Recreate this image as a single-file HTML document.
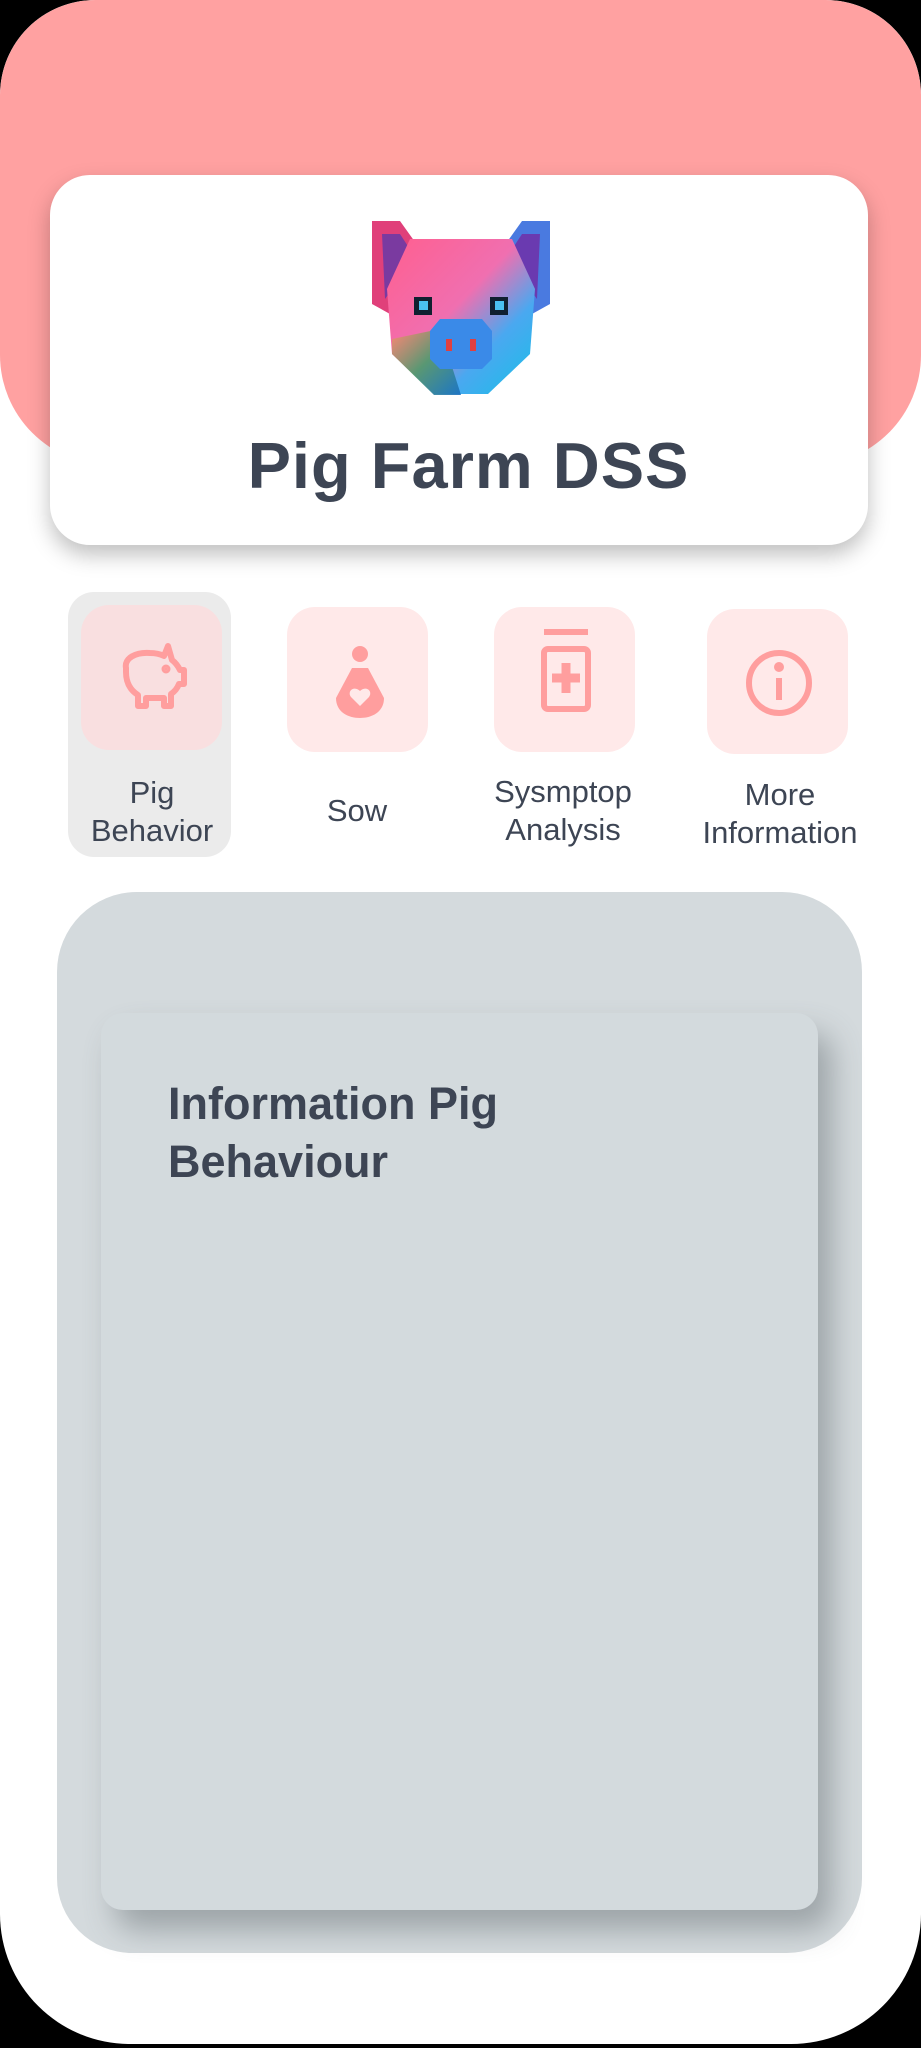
<!DOCTYPE html>
<html><head><meta charset="utf-8"><style>
*{margin:0;padding:0;box-sizing:border-box}
body{width:921px;height:2048px;background:#000;overflow:hidden;font-family:"Liberation Sans",sans-serif;position:relative}
.phone{position:absolute;left:0;top:0;width:921px;height:2044px;background:#fff;border-radius:95px 95px 130px 130px;overflow:hidden}
.pink{position:absolute;left:0;top:0;width:921px;height:465px;background:#ffa1a1;border-radius:95px 95px 110px 110px}
.card{position:absolute;left:50px;top:175px;width:818px;height:370px;background:#fff;border-radius:40px;box-shadow:0 10px 22px rgba(0,0,0,.25)}
.title{position:absolute;left:8px;width:100%;top:428px;text-align:center;font-size:65px;font-weight:bold;color:#3d4554;letter-spacing:1px}
.sel{position:absolute;left:68px;top:592px;width:163px;height:265px;background:#ebebeb;border-radius:26px}
.ib{position:absolute;width:141px;height:145px;border-radius:28px;background:#ffe9e9}
.lab{position:absolute;text-align:center;font-size:31px;color:#3d4554;line-height:38px;width:220px}
.panel{position:absolute;left:57px;top:892px;width:805px;height:1061px;background:#d4dadd;border-radius:80px 80px 75px 75px}
.inner{position:absolute;left:101px;top:1013px;width:717px;height:897px;background:#d3dadd;border-radius:22px;box-shadow:14px 20px 30px rgba(90,100,105,.45)}
.it{position:absolute;left:168px;top:1075px;font-size:45px;font-weight:bold;color:#3d4554;line-height:58px}
</style></head><body>
<div class="phone">
<div class="pink"></div>
<div class="card">
<svg style="position:absolute;left:320px;top:44px" width="182" height="180" viewBox="0 0 182 180">
<defs><linearGradient id="g" x1="0" y1="0" x2="1" y2="1"><stop offset="0" stop-color="#ff5f8f"/><stop offset=".45" stop-color="#f06fb0"/><stop offset=".7" stop-color="#4aa8f0"/><stop offset="1" stop-color="#17c0e8"/></linearGradient>
<linearGradient id="g2" x1="0" y1="0" x2="1" y2="1"><stop offset="0" stop-color="#ff8a70"/><stop offset=".5" stop-color="#4e9a6a"/><stop offset="1" stop-color="#1a6fc0"/></linearGradient></defs>
<polygon points="2,2 30,2 50,30 20,95 2,85" fill="#e0407a"/>
<polygon points="180,2 152,2 132,30 162,95 180,85" fill="#4a7ae0"/>
<polygon points="12,15 30,15 45,38 15,80" fill="#7a3aa0"/>
<polygon points="170,15 152,15 137,38 167,80" fill="#6a3ab0"/>
<path d="M40,20 H142 L165,70 L160,135 L118,175 H64 L22,135 L17,70 Z" fill="url(#g)"/>
<path d="M22,120 L70,110 L91,176 H64 L22,135 Z" fill="url(#g2)" opacity=".9"/>
<rect x="44" y="78" width="18" height="18" fill="#102030"/><rect x="49" y="82" width="9" height="9" fill="#4ac0f0"/>
<rect x="120" y="78" width="18" height="18" fill="#102030"/><rect x="125" y="82" width="9" height="9" fill="#4ac0f0"/>
<path d="M70,100 H112 L122,112 V140 L112,150 H70 L60,140 V112 Z" fill="#3a8ae8"/>
<rect x="76" y="120" width="6" height="12" fill="#e04040"/><rect x="100" y="120" width="6" height="12" fill="#e04040"/>
</svg>
</div>
<div class="title">Pig Farm DSS</div>

<div class="sel"></div>
<div class="ib" style="left:81px;top:605px;background:#f9dfe0"></div>
<div class="ib" style="left:287px;top:607px"></div>
<div class="ib" style="left:494px;top:607px"></div>
<div class="ib" style="left:707px;top:609px"></div>

<svg style="position:absolute;left:114px;top:640px" width="76" height="72" viewBox="0 0 72 72" fill="none" stroke="#ff9e9e" stroke-width="6" stroke-linejoin="round">
<path d="M10,28 C8,18 20,12 34,13 C40,13 44,14 48,16 L52,6 L56,20 C60,23 62,26 64,30 H68 V44 H63 C61,49 58,52 55,54 V66 H48 V58 H30 V66 H22 V55 C14,50 10,42 10,32 Z"/>
<circle cx="50" cy="29" r="1.5" fill="#ff9e9e"/>
</svg>
<svg style="position:absolute;left:330px;top:644px" width="60" height="76" viewBox="0 0 60 76">
<circle cx="30" cy="10" r="8" fill="#ff9e9e"/>
<path d="M22,24 H38 L54,54 C54,68 42,74 30,74 C18,74 6,68 6,54 Z" fill="#ff9e9e"/>
<path d="M30,62 L21,53 C17,48 23,41 30,47 C37,41 43,48 39,53 Z" fill="#ffe9e9"/>
</svg>
<svg style="position:absolute;left:538px;top:629px" width="56" height="84" viewBox="0 0 56 84" fill="none" stroke="#ff9e9e" stroke-width="6">
<line x1="6" y1="3" x2="50" y2="3"/>
<rect x="6" y="20" width="44" height="60" rx="4"/>
<path d="M28,34 V64 M14,49 H42" stroke-width="9"/>
</svg>
<svg style="position:absolute;left:743px;top:647px" width="72" height="72" viewBox="0 0 72 72" fill="none" stroke="#ff9e9e" stroke-width="6">
<circle cx="36" cy="36" r="30"/>
<line x1="36" y1="31" x2="36" y2="53"/><circle cx="36" cy="20" r="2" fill="#ff9e9e"/>
</svg>

<div class="lab" style="left:42px;top:774px">Pig<br>Behavior</div>
<div class="lab" style="left:247px;top:792px">Sow</div>
<div class="lab" style="left:453px;top:773px">Sysmptop<br>Analysis</div>
<div class="lab" style="left:670px;top:776px">More<br>Information</div>

<div class="panel"></div>
<div class="inner"></div>
<div class="it">Information Pig<br>Behaviour</div>
</div>
</body></html>
